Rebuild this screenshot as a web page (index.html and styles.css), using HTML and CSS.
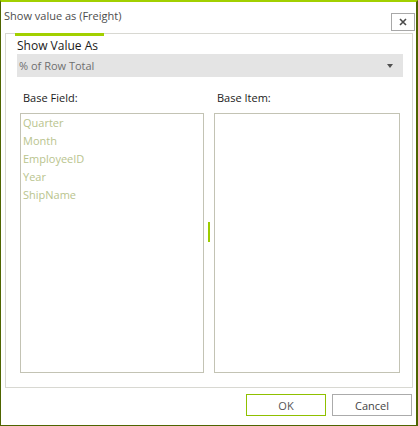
FILE: index.html
```html
<!DOCTYPE html>
<html>
<head>
<meta charset="utf-8">
<link rel="stylesheet" href="styles.css">
</head>
<body>
<div class="window">
  <div class="titlebar">
    <div class="title">Show value as (Freight)</div>
    <button class="close" aria-label="Close">
      <svg width="8" height="8" viewBox="0 0 8 8"><path d="M1 1L7 7M7 1L1 7" stroke="#4a4a4a" stroke-width="1.6" fill="none"/></svg>
    </button>
  </div>
  <div class="panel">
    <div class="tab-indicator"></div>
    <div class="section-label">Show Value As</div>
    <div class="dropdown">
      <span class="dropdown-text">% of Row Total</span>
      <svg class="arrow" width="6" height="4" viewBox="0 0 6 4"><path d="M0 0H6L3 4Z" fill="#505050"/></svg>
    </div>
    <div class="columns">
      <div class="col col-left">
        <div class="col-label">Base Field:</div>
        <div class="list">
          <div class="item">Quarter</div>
          <div class="item">Month</div>
          <div class="item">EmployeeID</div>
          <div class="item">Year</div>
          <div class="item">ShipName</div>
        </div>
      </div>
      <div class="splitter"><div class="handle"></div></div>
      <div class="col col-right">
        <div class="col-label">Base Item:</div>
        <div class="list"></div>
      </div>
    </div>
  </div>
  <div class="buttons">
    <button class="btn btn-ok">OK</button>
    <button class="btn btn-cancel">Cancel</button>
  </div>
</div>
</body>
</html>
```
FILE: styles.css
```css
html, body {
  margin: 0;
  padding: 0;
  background: #fff;
}
body {
  font-family: "Open Sans", "Noto Sans", sans-serif;
}
.window {
  width: 418px;
  height: 426px;
  box-sizing: border-box;
  border-top: 2px solid #a2d000;
  border-left: 1px solid #4e6400;
  border-right: 2px solid #4e6400;
  border-bottom: 1px solid #4e6400;
  display: flex;
  flex-direction: column;
}
.titlebar {
  height: 31px;
  display: flex;
  justify-content: space-between;
  align-items: flex-start;
  padding-left: 3px;
  padding-right: 1px;
}
.title {
  font-size: 11px;
  color: #4d4d4d;
  margin-top: 6px;
  line-height: 15px;
}
.close {
  margin-top: 11px;
  width: 24px;
  height: 18px;
  box-sizing: border-box;
  border: 1px solid #a8a8a8;
  background: #fff;
  padding: 0;
  display: flex;
  align-items: center;
  justify-content: center;
}
.panel {
  position: relative;
  margin: 0 3px 0 4px;
  height: 355px;
  box-sizing: border-box;
  border: 1px solid #d8d8d2;
  padding: 0 9px 0 11px;
  display: flex;
  flex-direction: column;
}
.tab-indicator {
  position: absolute;
  top: -1px;
  left: 9px;
  width: 89px;
  height: 3px;
  background: #a2d000;
}
.section-label {
  font-size: 12px;
  color: #1a1a1a;
  margin-top: 3px;
  height: 17px;
  line-height: 17px;
}
.dropdown {
  height: 23px;
  background: #e4e4e4;
  display: flex;
  align-items: center;
  justify-content: space-between;
  padding: 0 10px 0 2px;
}
.dropdown-text {
  font-size: 11px;
  color: #6f6f6f;
}
.arrow {
  margin-top: 1px;
}
.columns {
  display: flex;
  margin-top: 13px;
  margin-left: 3px;
  margin-right: 3px;
  flex: 1;
  padding-bottom: 14px;
}
.col {
  display: flex;
  flex-direction: column;
}
.col-left {
  width: 184px;
}
.col-right {
  width: 186px;
}
.col-label {
  font-size: 11px;
  color: #1a1a1a;
  height: 23px;
  line-height: 16px;
  padding-left: 3px;
}
.list {
  flex: 1;
  border: 1px solid #c3c3b4;
  padding-top: 0;
}
.item {
  font-size: 11px;
  color: #b9c48e;
  height: 18px;
  line-height: 17px;
  padding-left: 2px;
}
.splitter {
  width: 10px;
  display: flex;
  justify-content: center;
  align-items: center;
}
.handle {
  width: 2px;
  height: 20px;
  background: #9ccc00;
}
.buttons {
  display: flex;
  justify-content: flex-end;
  gap: 6px;
  padding: 6px 4px 0 0;
}
.btn {
  width: 80px;
  height: 22px;
  box-sizing: border-box;
  background: #fff;
  font-family: "Open Sans", "Noto Sans", sans-serif;
  font-size: 11px;
  padding: 0;
}
.btn-ok {
  border: 1px solid #8fc000;
  color: #555;
}
.btn-cancel {
  border: 1px solid #ababab;
  color: #444;
}
```
